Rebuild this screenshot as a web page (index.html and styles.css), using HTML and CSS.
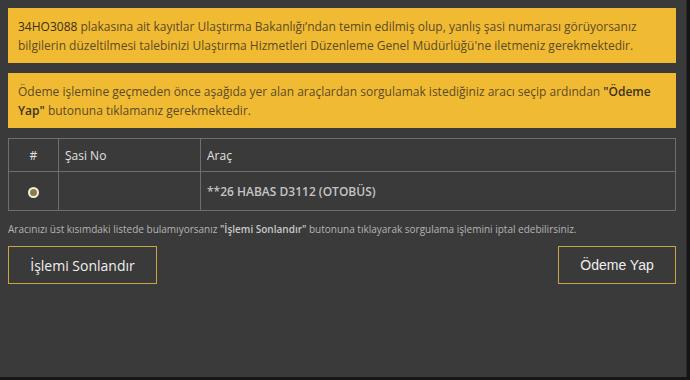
FILE: index.html
```html
<!DOCTYPE html>
<html lang="tr">
<head>
<meta charset="utf-8">
<link rel="stylesheet" href="styles.css">
</head>
<body>
<div class="panel">
  <div class="notice"><span class="plate">34HO3088</span> plakasına ait kayıtlar Ulaştırma Bakanlığı’ndan temin edilmiş olup, yanlış şasi numarası görüyorsanız bilgilerin düzeltilmesi talebinizi Ulaştırma Hizmetleri Düzenleme Genel Müdürlüğü'ne iletmeniz gerekmektedir.</div>
  <div class="notice">Ödeme işlemine geçmeden önce aşağıda yer alan araçlardan sorgulamak istediğiniz aracı seçip ardından <b>"Ödeme Yap"</b> butonuna tıklamanız gerekmektedir.</div>
  <table class="cars">
    <thead>
      <tr><th class="c-sel">#</th><th class="c-chassis">Şasi No</th><th>Araç</th></tr>
    </thead>
    <tbody>
      <tr><td class="c-sel"><span class="radio"></span></td><td></td><td class="car">**26 HABAS D3112 (OTOBÜS)</td></tr>
    </tbody>
  </table>
  <p class="hint">Aracınızı üst kısımdaki listede bulamıyorsanız <b>"İşlemi Sonlandır"</b> butonuna tıklayarak sorgulama işlemini iptal edebilirsiniz.</p>
  <div class="actions">
    <button class="btn btn-end">İşlemi Sonlandır</button>
    <button class="btn btn-pay">Ödeme Yap</button>
  </div>
</div>
</body>
</html>
```
FILE: styles.css
```css
html, body {
  margin: 0;
  padding: 0;
  background: #151515;
  width: 690px;
  height: 380px;
  overflow: hidden;
}
.panel {
  width: 687px;
  height: 377px;
  background: #3a3a3a;
  box-sizing: border-box;
  padding: 8px 10px 0 8px;
  font-family: "Open Sans", "Liberation Sans", sans-serif;
  border-right: 1px solid #2a2a2a;
}
.notice {
  background: #f0bb33;
  color: #5b4a26;
  font-size: 12px;
  line-height: 19px;
  padding: 9px 10px 8px 10px;
  margin-bottom: 10px;
}
.notice .plate {
  color: #3a2f1c;
}
.notice b {
  color: #3d3220;
  font-weight: 600;
}
.cars {
  width: 100%;
  border-collapse: collapse;
  color: #d6d6d6;
  font-size: 12px;
}
.cars th, .cars td {
  border: 1px solid #6e6e6e;
  text-align: left;
  padding: 0 6px;
}
.cars th {
  height: 32px;
  font-weight: 400;
  color: #e0e0e0;
}
.cars td {
  height: 38px;
}
.cars .c-sel {
  width: 37px;
  text-align: center;
}
.cars .c-chassis {
  width: 129px;
}
.cars .car {
  color: #c4c4c4;
  font-weight: 600;
}
.radio {
  display: inline-block;
  width: 7px;
  height: 7px;
  border: 2px solid #f3f0e0;
  border-radius: 50%;
  background: #8b7d45;
  vertical-align: middle;
}
.hint {
  margin: 11px 0 0 0;
  font-size: 10px;
  line-height: 14px;
  color: #b4b4b4;
}
.hint b {
  font-weight: 600;
  color: #c8c8c8;
}
.actions {
  display: flex;
  justify-content: space-between;
  margin-top: 10px;
}
.btn {
  background: transparent;
  border: 1px solid #c9a544;
  color: #efefef;
  height: 38px;
  padding: 0;
  font-size: 14px;
  cursor: pointer;
}
.btn-end {
  width: 149px;
  font-family: "Open Sans", "Liberation Sans", sans-serif;
}
.btn-pay {
  width: 118px;
  font-family: "Liberation Sans", Arial, sans-serif;
}
```
